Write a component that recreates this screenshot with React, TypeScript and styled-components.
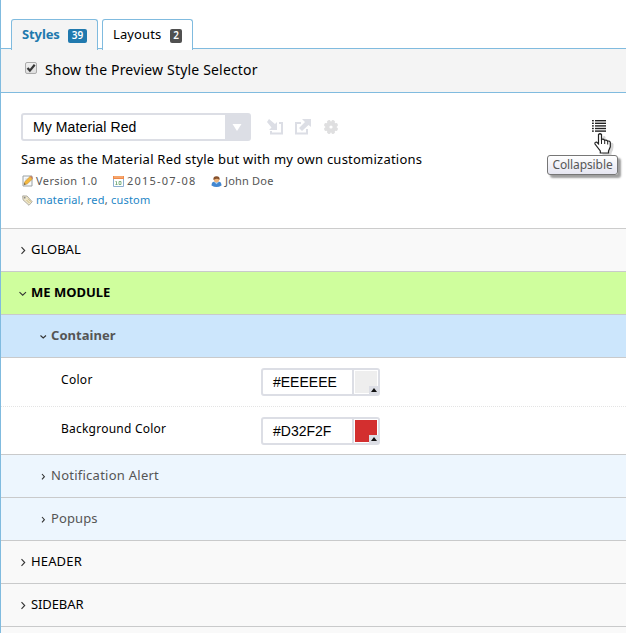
import React from "react";
import styled, { createGlobalStyle } from "styled-components";

const GlobalStyle = createGlobalStyle`
  * { box-sizing: border-box; }
  body { margin: 0; background: #fff; overflow: hidden; }
`;

const Panel = styled.main`
  width: 626px;
  height: 633px;
  overflow: hidden;
  border-left: 1px solid #80bbdf;
  background: #fff;
  color: #000;
  font-family: "Noto Sans", sans-serif;
`;

const Label = styled.span<{ $size?: number; $track?: number }>`
  font-size: ${(p) => p.$size ?? 13}px;
  letter-spacing: ${(p) => p.$track ?? 0}px;
  line-height: 18px;
  white-space: nowrap;
`;

const TabBar = styled.nav`
  display: flex;
  align-items: flex-end;
  gap: 4px;
  height: 49px;
  padding-left: 10px;
  border-bottom: 1px solid #80bbdf;
`;

const Tab = styled.div<{ $active?: boolean; $width: number }>`
  display: flex;
  flex: none;
  align-items: flex-start;
  justify-content: space-between;
  width: ${(p) => p.$width}px;
  height: 31px;
  margin-bottom: -2px;
  padding: 5px 10px 0;
  border: 1px solid #80bbdf;
  border-bottom: 0;
  border-radius: 3px 3px 0 0;
  background: ${(p) => (p.$active ? "#f4f4f4" : "#fff")};
  color: ${(p) => (p.$active ? "#2079ae" : "#000")};
  font-weight: ${(p) => (p.$active ? 700 : 400)};
`;

const Badge = styled.span<{ $color: string; $width: number }>`
  width: ${(p) => p.$width}px;
  height: 14px;
  margin-top: 4px;
  border-radius: 2px;
  background: ${(p) => p.$color};
  color: #fff;
  font-size: 10px;
  font-weight: 600;
  line-height: 13px;
  text-align: center;
`;

const OptionStrip = styled.label`
  display: flex;
  align-items: center;
  gap: 8px;
  height: 44px;
  padding: 0 0 2px 24px;
  border-bottom: 1px solid #80bbdf;
  background: #f4f4f4;
`;

const CheckBox = styled.span`
  display: flex;
  width: 12px;
  height: 12px;
  margin-top: -3px;
  border: 1px solid #ababab;
  border-radius: 2px;
  background: linear-gradient(#f0f0f0, #dedede);
`;

const Summary = styled.section`
  display: flex;
  flex-direction: column;
  height: 136px;
  padding: 20px 0 0 20px;
  border-bottom: 1px solid #ccc;
`;

const Toolbar = styled.div`
  display: flex;
  align-items: center;
  height: 28px;
`;

const Select = styled.div`
  display: flex;
  align-items: center;
  justify-content: space-between;
  width: 230px;
  height: 28px;
  padding-left: 10px;
  border: 2px solid #dcdee5;
  border-radius: 3px;
  font: 14px/24px "Liberation Sans", sans-serif;
  letter-spacing: 0.1px;
`;

const SelectArrow = styled.span`
  display: flex;
  align-items: center;
  justify-content: center;
  width: 24px;
  height: 24px;
  background: #dcdee5;
`;

const Actions = styled.div`
  display: flex;
  align-items: center;
  gap: 12px;
  margin-left: 16px;
`;

const ListToggle = styled.div`
  position: relative;
  display: flex;
  margin: -3px 20px 0 auto;
`;

const Pointer = styled.svg`
  position: absolute;
  z-index: 2;
  left: 1px;
  top: 13px;
`;

const Tooltip = styled.div`
  position: absolute;
  right: -12px;
  top: 36px;
  display: flex;
  justify-content: center;
  width: 71px;
  height: 20px;
  border: 1px solid #767676;
  border-radius: 3px;
  background: linear-gradient(#fff, #e5e5f0);
  box-shadow: 3px 3px 2px rgba(0, 0, 0, 0.38);
  color: #575757;
`;

const Description = styled.p`
  display: flex;
  margin: 9px 0 0;
  height: 18px;
`;

const Meta = styled.div<{ $top: number }>`
  display: flex;
  align-items: center;
  height: 18px;
  margin: ${(p) => p.$top}px 0 0 1px;
  color: #555;
`;

const MetaItem = styled.span<{ $width?: number; $link?: boolean }>`
  display: flex;
  align-items: center;
  gap: 3px;
  width: ${(p) => (p.$width ? `${p.$width}px` : "auto")};
  color: ${(p) => (p.$link ? "#2385c6" : "#555")};
`;

const Comma = styled.span`
  color: #555;
`;

const tones = {
  plain: { bg: "#f9f9f9", fg: "#000" },
  active: { bg: "#cffe9d", fg: "#000" },
  openChild: { bg: "#cce6fc", fg: "#555" },
  child: { bg: "#edf6fe", fg: "#555" },
};

const AccordionRow = styled.div<{ $tone: keyof typeof tones; $bold?: boolean; $nested?: boolean }>`
  display: flex;
  align-items: center;
  gap: 4px;
  height: 43px;
  padding-left: ${(p) => (p.$nested ? 38 : 18)}px;
  padding-bottom: 2px;
  border-bottom: 1px solid #c9cacb;
  background: ${(p) => tones[p.$tone].bg};
  color: ${(p) => tones[p.$tone].fg};
  font-weight: ${(p) => (p.$bold ? 700 : 400)};
`;

const FieldRow = styled.div<{ $last?: boolean }>`
  display: grid;
  grid-template-columns: 200px 119px;
  align-items: start;
  height: ${(p) => (p.$last ? 48 : 49)}px;
  padding: 10px 0 0 60px;
  border-bottom: ${(p) => (p.$last ? "1px solid #c9cacb" : "1px dotted #e4e4e4")};
`;

const FieldName = styled.div`
  display: flex;
  margin-top: 3px;
`;

const ColorInput = styled.div`
  display: flex;
  width: 119px;
  height: 28px;
  border: 2px solid #dcdee5;
  border-radius: 3px;
  font: 14px/24px "Liberation Sans", sans-serif;
`;

const HexValue = styled.span`
  flex: 1;
  padding-left: 10px;
`;

const Swatch = styled.span<{ $color: string }>`
  display: flex;
  align-items: flex-end;
  justify-content: flex-end;
  width: 24px;
  border: 1px solid #fff;
  box-shadow: -2px 0 0 #dcdee5;
  background: ${(p) => p.$color};
`;

const SwatchArrow = styled.span`
  display: flex;
  align-items: center;
  justify-content: center;
  width: 9px;
  height: 8px;
  margin: 0 -1px -1px 0;
  background: #dcdee5;
`;

const ChevronIcon = styled.svg`
  position: relative;
  top: 1px;
`;

function Chevron({ open, small }: { open?: boolean; small?: boolean }) {
  return (
    <ChevronIcon width="8" height="10" viewBox="0 0 8 10" fill="none" stroke="#333" strokeWidth="1.1">
      {open ? <path d={small ? "M1.5 4.5 4.2 7 7 4.5" : "M.5 4.2 3.7 7.2 7 4.2"} /> : <path d={small ? "M3 3 5.4 5.7 3 8.4" : "M2.5 2.2 5.7 5.5 2.5 8.8"} />}
    </ChevronIcon>
  );
}

function ImportIcon() {
  return (
    <svg width="16" height="16" viewBox="0 0 16 16" fill="#dcdee5">
      <path d="m2 0 6 5 2-2v8H2l2.5-2.5L0 3Z" />
      <path d="M12 3h4v12.5H3V12h2v1.5h9V5h-2Z" />
    </svg>
  );
}

function ExportIcon() {
  return (
    <svg width="16" height="16" viewBox="0 0 16 16" fill="#dcdee5">
      <path d="M7 0h9v8l-2.5-2L7 12 4 9l6-6Z" />
      <path d="M0 3h6v2H2v8.500h9V10h2v5.500H0Z" />
    </svg>
  );
}

function GearIcon() {
  return (
    <svg width="16" height="16" viewBox="0 0 16 16" fill="#dfdfe0">
      <circle cx="8" cy="8" r="5.6" />
      {[0, 45, 90, 135, 180, 225, 270, 315].map((a) => (
        <circle key={a} cx="8" cy="2.6" r="1.9" transform={`rotate(${a + 22.5} 8 8)`} />
      ))}
      <circle cx="8" cy="8" r="1.6" fill="#fff" />
    </svg>
  );
}

function ListIcon() {
  return (
    <svg width="14" height="13" viewBox="0 0 14 13" fill="#222">
      {[1, 3.6, 6.2, 8.8, 11.4].map((y) => (
        <React.Fragment key={y}>
          <rect x="0" y={y} width="1.8" height="1.4" />
          <rect x="3" y={y} width="11" height="1.4" />
        </React.Fragment>
      ))}
    </svg>
  );
}

function NoteIcon() {
  return (
    <svg width="11" height="12" viewBox="0 0 11 12">
      <path d="M1 1h9v10H1Z" fill="#f8fafb" stroke="#9ba2a5" />
      <path d="M3 4h4M3 6h3" stroke="#d3d8da" />
      <path d="m2 9.8.7-3L8 1.5 10.5 4 5.1 9.1Z" fill="#f4b83e" stroke="#b38437" strokeWidth=".5" />
      <path d="m8 1.5 1-.8 1.7 1.8-.2 1.5Z" fill="#c87958" />
      <path d="m2 9.8.5-1.7 1.2 1.1Z" fill="#444" />
    </svg>
  );
}

function CalendarIcon() {
  return (
    <svg width="11" height="11" viewBox="0 0 11 11">
      <path d="M.5.5h10v10H.5Z" fill="#fff" stroke="#8caed0" />
      <path d="M0 0h11v3H0Z" fill="#f08a4b" />
      <path d="M1 1h9" stroke="#fbc18e" />
      <path d="M2.500 5.500h1v3m-1 0h2M6 5.500h2v3H6Z" fill="none" stroke="#62a169" strokeWidth=".8" />
    </svg>
  );
}

function UserIcon() {
  return (
    <svg width="11" height="11" viewBox="0 0 11 11">
      <path d="M.5 9.5Q.5 6 3 5.7h5q2.5.3 2.5 3.8Q8 11 5.5 11T.5 9.5Z" fill="#4387d0" />
      <path d="M3.2 6 5.5 8.3 7.8 6" fill="#a7d0f3" />
      <circle cx="5.5" cy="3.8" r="2.6" fill="#edb47c" />
      <path d="M2.5 4Q1.7.2 5.5.2T8.5 4Q7 2.5 5.5 2.7T2.5 4Z" fill="#88512c" />
    </svg>
  );
}

function TagIcon() {
  return (
    <svg width="11" height="11" viewBox="0 0 11 11">
      <path d="M.7.9 5 1l5.2 5.7L7 10.3 1 4.8Z" fill="#eee6ca" stroke="#a9a69b" strokeWidth=".9" />
      <path d="m4.5 5 3 3M6 3.8l3 3" stroke="#d0bd83" />
      <circle cx="2.7" cy="2.7" r=".9" fill="#888" />
    </svg>
  );
}

function HandPointer() {
  return (
    <Pointer width="22" height="25" viewBox="0 0 22 25">
      <path d="M8 4v9l-2-2q-2-1-2 1l4 7v4h9v-3q2-3 2-6V11q-1-2-3-1-1-2-3-1-1-1-2-1V4q-1-2-3 0Z" fill="#999" opacity=".4" transform="translate(1.5 1)" />
      <path d="M5.5 2.500q1.500-1.500 3 0v5q1.900-.8 3.200.8 1.800-.7 3 .8 2.300-.5 2.600 1.500v4.200l-1.800 4.200v2H7.300v-2L2 12q-.5-2 1.600-2l1.900 1.800Z" fill="#fff" stroke="#222" strokeWidth="1.2" />
      <path d="M8.500 7.500V12m3.200-3.900V12m3-3v3.500" stroke="#222" fill="none" />
    </Pointer>
  );
}

type Section = { name: string; track: number; tone: keyof typeof tones; open?: boolean; nested?: boolean };
const before: Section[] = [
  { name: "GLOBAL", track: 0, tone: "plain" },
  { name: "ME MODULE", track: 0, tone: "active", open: true },
  { name: "Container", track: 0.05, tone: "openChild", open: true, nested: true },
];
const after: Section[] = [
  { name: "Notification Alert", track: 0.25, tone: "child", nested: true },
  { name: "Popups", track: 0.1, tone: "child", nested: true },
  { name: "HEADER", track: 0.15, tone: "plain" },
  { name: "SIDEBAR", track: -0.1, tone: "plain" },
  { name: "", track: 0, tone: "plain" },
];
const fields = [
  { name: "Color", hex: "#EEEEEE", track: 0.3 },
  { name: "Background Color", hex: "#D32F2F", track: 0.23 },
];

function SectionRow({ section }: { section: Section }) {
  return (
    <AccordionRow $tone={section.tone} $bold={section.open} $nested={section.nested}>
      {section.name && <Chevron open={section.open} small={section.nested} />}
      <Label $track={section.track}>{section.name}</Label>
    </AccordionRow>
  );
}

export default function App() {
  return (
    <Panel>
      <GlobalStyle />
      <TabBar>
        <Tab $active $width={87}>
          <Label $track={-0.1}>Styles</Label>
          <Badge $color="#2079ae" $width={19}>39</Badge>
        </Tab>
        <Tab $width={91}>
          <Label $track={0.1}>Layouts</Label>
          <Badge $color="#505050" $width={12}>2</Badge>
        </Tab>
      </TabBar>
      <OptionStrip>
        <CheckBox>
          <svg width="10" height="10" viewBox="0 0 10 10" fill="none" stroke="#373737" strokeWidth="2.2"><path d="m1.5 5 2.4 2.6L8.7 1.8" /></svg>
        </CheckBox>
        <Label $size={14} $track={0.18}>Show the Preview Style Selector</Label>
      </OptionStrip>
      <Summary>
        <Toolbar>
          <Select>
            My Material Red
            <SelectArrow><svg width="10" height="8" viewBox="0 0 10 8"><path d="M.5 1h9L5 8Z" fill="#fff" /></svg></SelectArrow>
          </Select>
          <Actions><ImportIcon /><ExportIcon /><GearIcon /></Actions>
          <ListToggle>
            <ListIcon />
            <Tooltip><Label $size={12} $track={-0.1}>Collapsible</Label></Tooltip>
            <HandPointer />
          </ListToggle>
        </Toolbar>
        <Description><Label $track={0.23}>Same as the Material Red style but with my own customizations</Label></Description>
        <Meta $top={4}>
          <MetaItem $width={91}><NoteIcon /><Label $size={11} $track={0.4}>Version 1.0</Label></MetaItem>
          <MetaItem $width={98}><CalendarIcon /><Label $size={11} $track={1.2}>2015-07-08</Label></MetaItem>
          <MetaItem><UserIcon /><Label $size={11} $track={0.2}>John Doe</Label></MetaItem>
        </Meta>
        <Meta $top={1}>
          <MetaItem $link><TagIcon /><Label $size={11} $track={0.2}>material<Comma>, </Comma>red<Comma>, </Comma>custom</Label></MetaItem>
        </Meta>
      </Summary>
      {before.map((s) => <SectionRow key={s.name} section={s} />)}
      {fields.map((f, i) => (
        <FieldRow key={f.name} $last={i === 1}>
          <FieldName><Label $size={12} $track={f.track}>{f.name}</Label></FieldName>
          <ColorInput>
            <HexValue>{f.hex}</HexValue>
            <Swatch $color={f.hex}>
              <SwatchArrow><svg width="6" height="4" viewBox="0 0 6 4"><path d="M0 4 3 0l3 4Z" fill="#111" /></svg></SwatchArrow>
            </Swatch>
          </ColorInput>
        </FieldRow>
      ))}
      {after.map((s) => <SectionRow key={s.name} section={s} />)}
    </Panel>
  );
}
